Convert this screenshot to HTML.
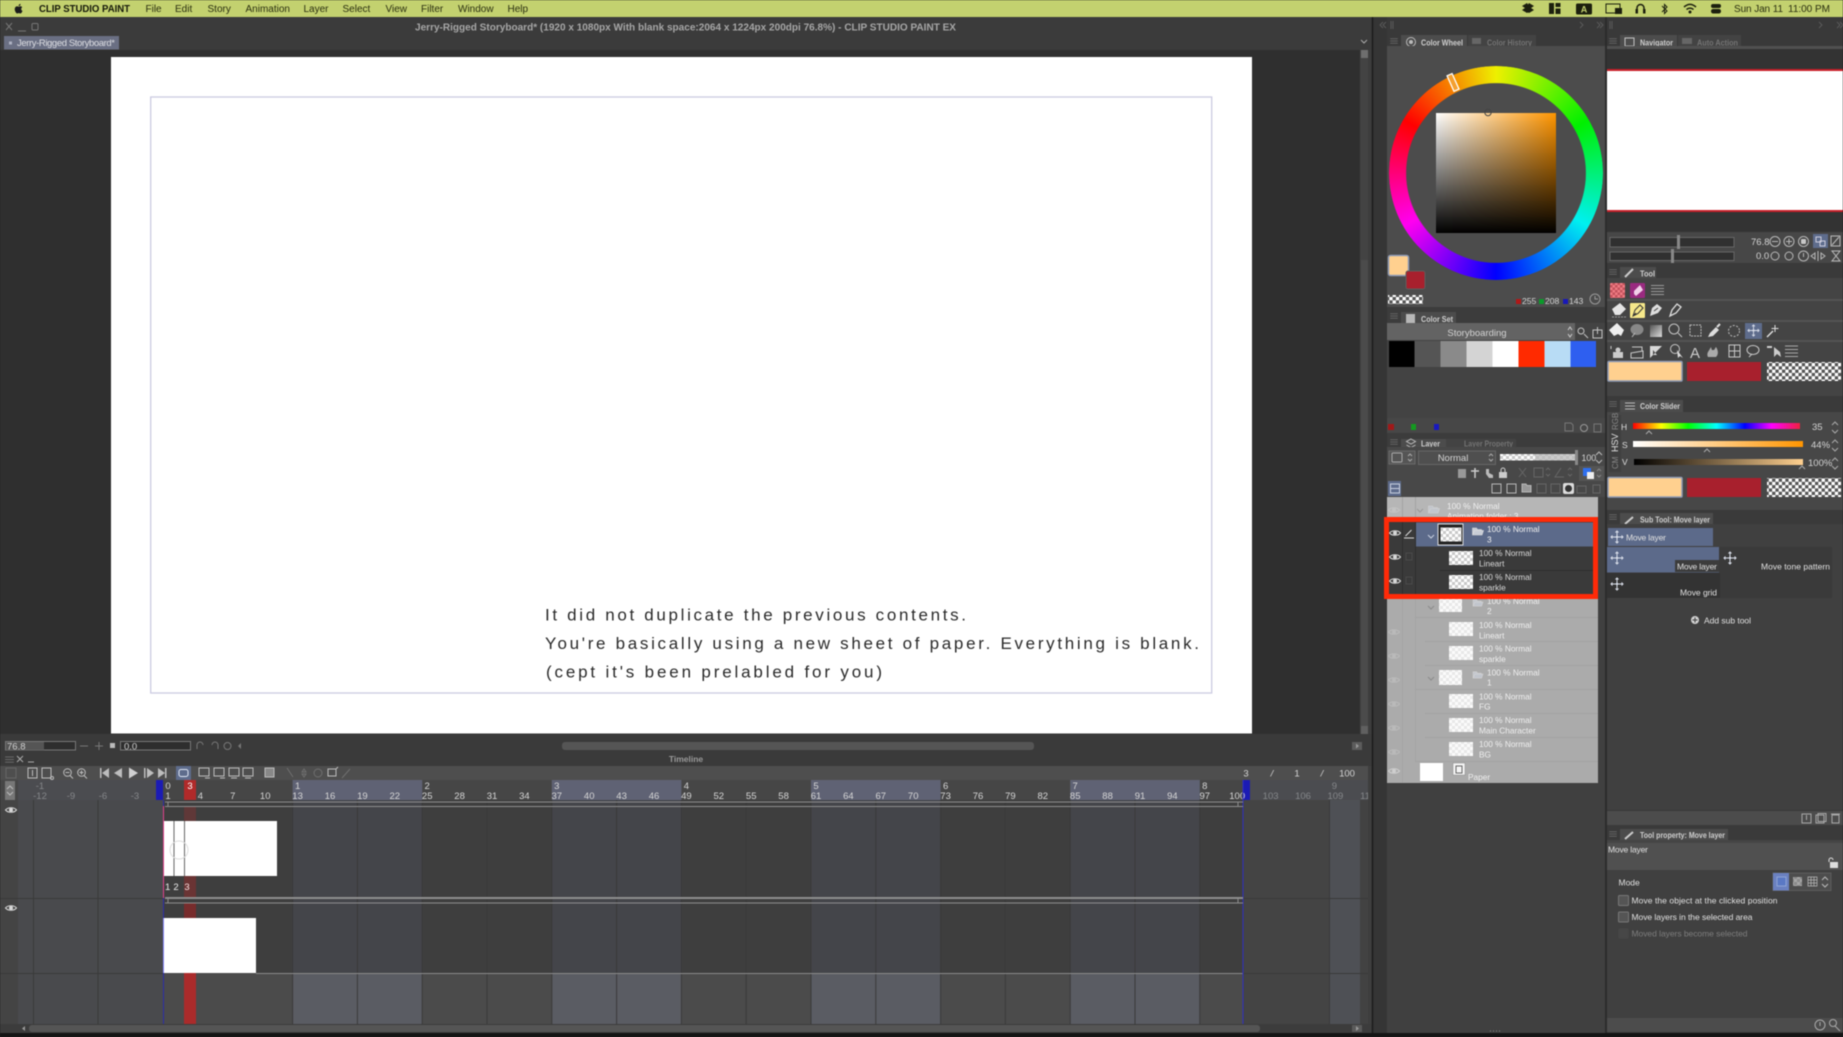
<!DOCTYPE html>
<html><head><meta charset="utf-8"><title>Clip Studio Paint</title>
<style>
html,body{margin:0;padding:0;background:#222;width:1843px;height:1037px;overflow:hidden}
#wrap{position:relative;width:1843px;height:1037px;filter:blur(.4px)}
svg{position:absolute;left:0;top:0;display:block}
text{font-family:"Liberation Sans",sans-serif;font-size:8.600px;fill:#d4d4d4}
.m{font-size:10px;fill:#2a2f10}
.c{text-anchor:middle}
.r{font-size:9.500px;text-anchor:middle;fill:#d6d6d6}
.rd{font-size:9.500px;text-anchor:middle;fill:#85878a}
.l{font-size:8.300px;fill:#efefef}
.h{font-size:8.500px;fill:#e0e0e0}
.tab{font-size:8.500px;font-weight:bold;fill:#cfcfcf}
.tabd{font-size:8.500px;font-weight:bold;fill:#747474}
.hw{font-size:17px;fill:#2a2a2a}
.i{fill:none;stroke:#c4c4c4;stroke-width:1}
.id{fill:none;stroke:#777;stroke-width:1}
#wheel{position:absolute;left:1389px;top:66px;width:214px;height:214px;border-radius:50%;background:conic-gradient(#eef000 0deg,#00f000 60deg,#00f0f0 120deg,#0000ff 180deg,#ff00f0 240deg,#ff0000 300deg,#eef000 360deg);-webkit-mask:radial-gradient(circle closest-side,transparent 83.6%,#000 84.4%);mask:radial-gradient(circle closest-side,transparent 83.6%,#000 84.4%)}
</style></head><body><div id="wrap">
<svg width="1843" height="1037" viewBox="0 0 1843 1037" xmlns="http://www.w3.org/2000/svg">
<defs>
<pattern id="ckd" width="6.600" height="6.600" patternUnits="userSpaceOnUse"><rect width="6.600" height="6.600" fill="#fff"/><rect width="3.300" height="3.300" fill="#555"/><rect x="3.300" y="3.300" width="3.300" height="3.300" fill="#555"/></pattern>
<pattern id="cks" width="6" height="6" patternUnits="userSpaceOnUse"><rect width="6" height="6" fill="#fff"/><rect width="3" height="3" fill="#c8c8c8"/><rect x="3" y="3" width="3" height="3" fill="#c8c8c8"/></pattern>
<pattern id="ckl" width="6" height="6" patternUnits="userSpaceOnUse"><rect width="6" height="6" fill="#fbfbfb"/><rect width="3" height="3" fill="#e8e8e8"/><rect x="3" y="3" width="3" height="3" fill="#e8e8e8"/></pattern>
<pattern id="ckr" width="5" height="5" patternUnits="userSpaceOnUse"><rect width="5" height="5" fill="#ee7a82"/><rect width="2.500" height="2.500" fill="#c2525c"/><rect x="2.500" y="2.500" width="2.500" height="2.500" fill="#c2525c"/></pattern>
<linearGradient id="sv1"><stop offset="0" stop-color="#fff"/><stop offset="1" stop-color="#ff9500"/></linearGradient>
<linearGradient id="sv2" x2="0" y2="1"><stop offset="0" stop-color="#000" stop-opacity="0"/><stop offset="1" stop-color="#000"/></linearGradient>
<linearGradient id="gs" x1="0" y1="0" x2="1" y2="1"><stop offset="0" stop-color="#555"/><stop offset="1" stop-color="#ddd"/></linearGradient>
<linearGradient id="hue"><stop offset="0" stop-color="#f00"/><stop offset=".17" stop-color="#ff0"/><stop offset=".33" stop-color="#0f0"/><stop offset=".5" stop-color="#0ff"/><stop offset=".67" stop-color="#00f"/><stop offset=".83" stop-color="#f0f"/><stop offset="1" stop-color="#f02040"/></linearGradient>
<linearGradient id="sat"><stop offset="0" stop-color="#fff"/><stop offset="1" stop-color="#ff9500"/></linearGradient>
<linearGradient id="val"><stop offset="0" stop-color="#000"/><stop offset="1" stop-color="#ffd08f"/></linearGradient>
<symbol id="eye" viewBox="0 0 12 8" overflow="visible"><path d="M.5 4C3 1 9 1 11.500 4 9 7 3 7 .5 4z" fill="none" stroke="#d8d8d8"/><circle cx="6" cy="4" r="2" fill="#d8d8d8"/></symbol>
<symbol id="mv" viewBox="0 0 14 14" overflow="visible"><path d="M7 1v12M1 7h12M5.500 2.500 7 1l1.500 1.500M5.500 11.500 7 13l1.500-1.500M2.500 5.500 1 7l1.500 1.500M11.500 5.500 13 7l-1.500 1.500" fill="none" stroke="#d8dde8" stroke-width="1"/><circle cx="7" cy="7" r="1.200" fill="#d8dde8"/></symbol>
<symbol id="fold" viewBox="0 0 12 10" overflow="visible"><path d="M.5 9V2h4l1 1.500h4V5M.5 9l2-4.500H11.500L10 9z" fill="#c7ccd6" stroke="#e0e0e0" stroke-width=".6"/></symbol>
<symbol id="ham" viewBox="0 0 10 8" overflow="visible"><path d="M0 1h10M0 4h10M0 7h10" stroke="#6f6f6f"/></symbol>
</defs>

<rect width="1843" height="1037" fill="#2c2c2c"/>

<!-- menu bar -->
<rect width="1843" height="17" fill="#c3d16f"/>
<path transform="translate(12.500 1.500) scale(.6)" fill="#1b1b1b" d="M14.500 12.600c0-2 1.600-3 1.700-3-.9-1.400-2.400-1.600-2.900-1.600-1.200-.1-2.400.7-3 .7s-1.600-.7-2.600-.7c-1.300 0-2.600.8-3.300 2-1.400 2.400-.4 6 1 8 .7 1 1.500 2 2.500 2 1 0 1.400-.6 2.600-.6s1.500.6 2.600.6c1.100 0 1.800-1 2.400-2 .8-1.100 1.100-2.200 1.100-2.300-.1 0-2.100-.8-2.100-3.100zM12.600 6.600c.5-.7.900-1.600.8-2.600-.8 0-1.800.5-2.400 1.200-.5.6-1 1.500-.8 2.400.9.1 1.800-.4 2.400-1z"/>
<text class="m" x="39" y="12" style="font-weight:bold;fill:#15180a" textLength="91" lengthAdjust="spacingAndGlyphs">CLIP STUDIO PAINT</text>
<text class="m" x="145.500" y="12">File</text><text class="m" x="175" y="12">Edit</text><text class="m" x="207.500" y="12">Story</text><text class="m" x="245.500" y="12">Animation</text><text class="m" x="303.500" y="12">Layer</text><text class="m" x="342.500" y="12">Select</text><text class="m" x="385.500" y="12">View</text><text class="m" x="421" y="12">Filter</text><text class="m" x="458" y="12">Window</text><text class="m" x="507.500" y="12">Help</text>
<path d="M1527 3l-5 3 3 2-3 2 5 3 1-.6 1 .6 5-3-3-2 3-2-5-3-1 1.500z" fill="#1c1f0e"/>
<path d="M1549 3h5v11h-5zM1555.500 3h5v4h-5zM1555.500 8.500h5v5.500h-5z" fill="#1c1f0e"/>
<rect x="1576" y="3.500" width="16" height="11" rx="1.500" fill="#1c1f0e"/><text x="1584" y="12.500" class="c" style="fill:#c3d16f;font-size:9px;font-weight:bold">A</text>
<path d="M1606 4h14v9h-14z" fill="none" stroke="#1c1f0e"/><rect x="1615" y="8" width="7" height="6" fill="#1c1f0e"/>
<path d="M1637 13V8a3.500 3.500 0 0 1 7 0v5" fill="none" stroke="#1c1f0e" stroke-width="1.500"/><rect x="1635.500" y="9" width="2.500" height="4.500" fill="#1c1f0e"/><rect x="1643" y="9" width="2.500" height="4.500" fill="#1c1f0e"/>
<path d="M1662 6l5 5-2.500 2.500v-9L1667 7l-5 5" fill="none" stroke="#1c1f0e"/>
<path d="M1684 7c4-3.500 8-3.500 12 0M1686.500 9.500c2.500-2 4.500-2 7 0" fill="none" stroke="#1c1f0e" stroke-width="1.500"/><circle cx="1690" cy="12" r="1.500" fill="#1c1f0e"/>
<rect x="1711" y="4" width="10" height="4" rx="2" fill="#1c1f0e"/><rect x="1711" y="9" width="10" height="4.500" rx="2.200" fill="#1c1f0e"/>
<text class="m" x="1734" y="12" textLength="49" style="font-size:10px">Sun Jan 11</text><text class="m" x="1788" y="12" textLength="42" style="font-size:10px">11:00 PM</text>

<!-- title bar -->
<rect y="17" width="1372" height="33" fill="#3b3b3b"/>
<path d="M6 23l6 7M12 23l-6 7" class="id"/><path d="M18 31h8" class="id"/><rect x="32" y="23.500" width="6" height="6.500" rx="1" class="id"/>
<text x="415" y="30.500" textLength="541" lengthAdjust="spacingAndGlyphs" style="font-size:10px;font-weight:bold;fill:#a6a6a6">Jerry-Rigged Storyboard* (1920 x 1080px With blank space:2064 x 1224px 200dpi 76.8%)  - CLIP STUDIO PAINT EX</text>
<rect x="4" y="36" width="115" height="13.500" fill="#6a6f83"/><rect x="9" y="41.500" width="3" height="3" fill="#aeb2c2"/><text x="17" y="46" textLength="98" style="font-size:9.500px;fill:#dcdde2">Jerry-Rigged Storyboard*</text>
<path d="M1361 40l3 3 3-3" fill="none" stroke="#aaa"/>

<!-- canvas -->
<rect y="50" width="1360" height="684" fill="#2f2f2f"/>
<rect x="1360" y="50" width="12" height="684" fill="#3d3d3d"/><rect x="1360" y="50" width="8" height="684" fill="#434343"/><rect x="1361" y="50" width="7" height="8" fill="#6e6e6e"/><rect x="1361" y="260" width="7" height="466" fill="#4b4b4b"/><rect x="1361" y="726" width="7" height="8" fill="#606060"/>
<rect x="111" y="57" width="1141" height="676.500" fill="#fff"/>
<rect x="150.700" y="97" width="1061" height="596" fill="#fff" stroke="#cccbe2" stroke-width="1.300"/>
<text class="hw" x="545" y="620.500" textLength="421">It did not duplicate the previous contents.</text>
<text class="hw" x="545" y="649" textLength="654">You're basically using a new sheet of paper. Everything is blank.</text>
<text class="hw" x="546" y="677.500" textLength="336">(cept it's been prelabled for you)</text>

<!-- canvas status -->
<rect y="734" width="1372" height="18" fill="#3a3a3a"/>
<rect x="5.500" y="741.500" width="70" height="8.500" fill="#2e2e2e" stroke="#777"/><rect x="6" y="742" width="38" height="8" fill="#555"/><text x="7" y="749.500" style="fill:#d0d0d0;font-size:9.500px">76.8</text>
<path d="M80 746h8M95 746h8M99 742v8" class="id"/><rect x="110" y="743" width="5" height="5" fill="#bbb"/>
<rect x="120.500" y="741.500" width="70" height="8.500" fill="#2e2e2e" stroke="#777"/><text x="124" y="749.500" style="fill:#d0d0d0;font-size:9.500px">0.0</text>
<path d="M197 749v-4a3 3 0 0 1 6 0M212 745a3 3 0 0 1 6 0v4" class="id"/><circle cx="227.500" cy="746" r="3.500" class="id"/><path d="M241 743l-3 3 3 3z" fill="#777"/>
<rect x="562" y="742" width="472" height="8" rx="3" fill="#555"/>
<path d="M1352 742h10v8h-10z" fill="#5c5c5c"/><path d="M1356 743.500l3 2.500-3 2.500z" fill="#999"/>

<!-- timeline header -->
<rect y="752" width="1372" height="14" fill="#3a3a3a"/>
<use href="#ham" x="5" y="756" width="9" height="7"/><path d="M17 756l6 6M23 756l-6 6" stroke="#aaa" fill="none"/><path d="M28 762h6" stroke="#aaa"/>
<text x="686" y="762" class="c" style="font-size:8.500px;fill:#9a9a9a;font-weight:bold">Timeline</text>
<rect y="766" width="1368" height="14" fill="#4e4e4e"/>
<rect x="176" y="766" width="15" height="14" fill="#5e6c8c"/>
<g fill="none" stroke="#bdbdbd">
<rect x="6" y="768" width="10" height="10" stroke="#666"/>
<rect x="28" y="768" width="9" height="10"/><path d="M32.500 770v6"/>
<rect x="42" y="768" width="9" height="10"/><circle cx="52" cy="778" r="1.500"/>
<circle cx="67.500" cy="772.500" r="3.800"/><path d="M70 775.500l3 3M65.500 772.500h4"/>
<circle cx="81.500" cy="772.500" r="3.800"/><path d="M84 775.500l3 3M79.500 772.500h4M81.500 770.500v4"/>
<rect x="179" y="769.500" width="9" height="7" rx="2" stroke="#dfe6f4"/>
<rect x="199" y="768" width="10" height="8"/><rect x="214" y="768" width="10" height="8"/><rect x="229" y="768" width="10" height="8"/><rect x="243" y="768" width="10" height="8"/>
<path d="M205 778h5M220 778h5M231 778h6M245 778h6"/>
<rect x="265" y="768" width="9" height="9" fill="#888"/>
<g stroke="#6f6f6f"><path d="M287 768l6 9M304 769l-2 3h4zM304 777l-2-3h4z"/><circle cx="318" cy="773" r="4"/></g>
<path d="M328 769h8v7h-8zM336 769l2-2"/>
<path d="M342 778l8-9" stroke="#6f6f6f"/>
</g>
<g fill="#bdbdbd">
<path d="M100 768h1.500v10H100zM109 768v10l-7-5z"/>
<path d="M122 768v10l-8-5z"/><path d="M129 767.500v11l9-5.500z" fill="#d0d0d0"/>
<path d="M144 768h1.500v10H144zM147 768v10l7-5z"/><path d="M158 768v10l7-5zM165 768h1.500v10H165z"/>
</g>
<text x="1246" y="776.500" class="c" style="font-size:9.500px">3</text><text x="1272" y="776.500" class="c" style="font-size:9.500px;font-style:italic">/</text><text x="1297" y="776.500" class="c" style="font-size:9.500px">1</text><text x="1322" y="776.500" class="c" style="font-size:9.500px;font-style:italic">/</text><text x="1347" y="776.500" class="c" style="font-size:9.500px">100</text>

<!-- ruler -->
<rect x="0" y="780" width="1368" height="20" fill="#464646"/>
<rect x="18" y="780" width="145" height="20" fill="#4b4c50"/>
<rect x="1243" y="780" width="125" height="20" fill="#4b4c50"/>
<g fill="#5f6274"><rect x="292.600" y="780" width="129.600" height="20"/><rect x="551.800" y="780" width="129.600" height="20"/><rect x="811" y="780" width="129.600" height="20"/><rect x="1070.200" y="780" width="129.600" height="20"/></g>
<rect x="5" y="781" width="10" height="19" fill="#777"/><path d="M7 789l3-3 3 3M7 792l3 3 3-3" fill="none" stroke="#bbb"/>
<rect x="156" y="780" width="7" height="20" fill="#1b1bb4"/>
<rect x="184" y="780" width="12" height="20" fill="#b02a2a"/>
<rect x="1243" y="780" width="7" height="20" fill="#1b1bb4"/>
<text class="rd" x="40" y="789">-1</text>
<text class="r" x="168" y="789">0</text><text class="r" x="190" y="789" style="fill:#fff">3</text><text class="r" x="297.600" y="789">1</text><text class="r" x="427.200" y="789">2</text><text class="r" x="556.800" y="789">3</text><text class="r" x="686.400" y="789">4</text><text class="r" x="816" y="789">5</text><text class="r" x="945.600" y="789">6</text><text class="r" x="1075.200" y="789">7</text><text class="r" x="1204.800" y="789">8</text><text class="rd" x="1334.400" y="789">9</text>
<text class="rd" x="40" y="799">-12</text><text class="rd" x="71" y="799">-9</text><text class="rd" x="103" y="799">-6</text><text class="rd" x="135" y="799">-3</text>
<text class="r" x="168" y="799">1</text><text class="r" x="200.400" y="799">4</text><text class="r" x="232.800" y="799">7</text><text class="r" x="265.200" y="799">10</text><text class="r" x="297.600" y="799">13</text><text class="r" x="330" y="799">16</text><text class="r" x="362.400" y="799">19</text><text class="r" x="394.800" y="799">22</text><text class="r" x="427.200" y="799">25</text><text class="r" x="459.600" y="799">28</text><text class="r" x="492" y="799">31</text><text class="r" x="524.400" y="799">34</text><text class="r" x="556.800" y="799">37</text><text class="r" x="589.200" y="799">40</text><text class="r" x="621.600" y="799">43</text><text class="r" x="654" y="799">46</text><text class="r" x="686.400" y="799">49</text><text class="r" x="718.800" y="799">52</text><text class="r" x="751.200" y="799">55</text><text class="r" x="783.600" y="799">58</text><text class="r" x="816" y="799">61</text><text class="r" x="848.400" y="799">64</text><text class="r" x="880.800" y="799">67</text><text class="r" x="913.200" y="799">70</text><text class="r" x="945.600" y="799">73</text><text class="r" x="978" y="799">76</text><text class="r" x="1010.400" y="799">79</text><text class="r" x="1042.800" y="799">82</text><text class="r" x="1075.200" y="799">85</text><text class="r" x="1107.600" y="799">88</text><text class="r" x="1140" y="799">91</text><text class="r" x="1172.400" y="799">94</text><text class="r" x="1204.800" y="799">97</text><text class="r" x="1237.200" y="799">100</text><text class="rd" x="1270.600" y="799">103</text><text class="rd" x="1303" y="799">106</text><text class="rd" x="1335.400" y="799">109</text><text class="rd" x="1365" y="799">11</text>

<!-- tracks -->
<rect x="0" y="800" width="18" height="224" fill="#444"/>
<rect x="18" y="800" width="145" height="224" fill="#494a4d"/>
<rect x="1243" y="800" width="87" height="224" fill="#444"/>
<rect x="1330" y="800" width="30" height="224" fill="#4e5055"/>
<rect x="1360" y="800" width="8" height="224" fill="#424242"/>
<rect x="1368" y="766" width="4" height="267" fill="#3e3e3e"/>
<rect x="163" y="800" width="1080" height="173" fill="#3e3e3e"/>
<rect x="163" y="973" width="1080" height="51" fill="#4b4b4b"/>
<g fill="#44454a"><rect x="292.600" y="800" width="129.600" height="173"/><rect x="551.800" y="800" width="129.600" height="173"/><rect x="811" y="800" width="129.600" height="173"/><rect x="1070.200" y="800" width="129.600" height="173"/></g>
<g fill="#5a5c63"><rect x="292.600" y="973" width="129.600" height="51"/><rect x="551.800" y="973" width="129.600" height="51"/><rect x="811" y="973" width="129.600" height="51"/><rect x="1070.200" y="973" width="129.600" height="51"/></g>
<g stroke="#3a3a3a"><path d="M33.500 800v224M98 800v224M292.600 800v224M357.400 800v224M422.200 800v224M487 800v224M551.800 800v224M616.600 800v224M681.400 800v224M746.200 800v224M811 800v224M875.800 800v224M940.600 800v224M1005.400 800v224M1070.200 800v224M1135 800v224M1199.800 800v224M1329.400 800v224"/><path d="M0 898.500h1368M0 973.500h163M1243 973.500h125"/></g>
<rect x="184" y="807" width="12" height="14" fill="#5f3838"/><rect x="184" y="876" width="12" height="22" fill="#6a3434"/><rect x="184" y="903" width="12" height="15" fill="#772c2c"/><rect x="184" y="973" width="12" height="51" fill="#aa2b2b"/>
<rect x="163" y="821" width="114" height="55" fill="#fff"/>
<path d="M174 821v55M184.500 821v55" stroke="#666" stroke-width="1"/>
<circle cx="179" cy="850" r="9" fill="none" stroke="#ddd"/>
<text x="165" y="890" style="fill:#eee;font-size:9.500px">1</text><text x="176" y="890" class="c" style="fill:#eee;font-size:9.500px">2</text><text x="187" y="890" class="c" style="fill:#f6e0e0;font-size:9.500px">3</text>
<rect x="163" y="918" width="93" height="55" fill="#fff"/>
<path d="M256 973.500h987" stroke="#8a8a8a"/>
<path d="M163.500 800v224" stroke="#2c2ca8"/>
<path d="M163.500 806v92" stroke="#e0408a"/>
<path d="M163.500 918v55" stroke="#8888ff"/>
<path d="M1243 780v244" stroke="#3030c0"/>
<g stroke="#8e8e8e" fill="none"><path d="M165 802h1078M165 806.500h1078M165 897.500h1078M165 898.500h1078M165 903h1078"/><path d="M168 802v5M1238 802v5M168 898v5M1238 898v5"/></g>
<use href="#eye" x="5" y="806" width="12" height="8"/><use href="#eye" x="5" y="904" width="12" height="8"/>
<rect y="1024" width="1372" height="9" fill="#3c3c3c"/><rect x="29" y="1025" width="1231" height="7" rx="3" fill="#555"/><path d="M25 1026l-3 2.500 3 2.500z" fill="#999"/><path d="M1352 1025h10v7h-10z" fill="#5a5a5a"/><path d="M1356 1026l3 2.500-3 2.500z" fill="#999"/>

<!-- right side backdrop -->
<rect x="1373" y="17" width="470" height="1016" fill="#393939"/>
<rect x="1373" y="17" width="14" height="1016" fill="#353535"/>
<path d="M1372.500 17v1016" stroke="#1c1c1c" stroke-width="1.500"/>
<rect x="1605" y="17" width="2" height="1016" fill="#2c2c2c"/>
<rect y="1033" width="1843" height="4" fill="#151515"/>
<g fill="none" stroke="#5a5a5a"><path d="M1383 22l-3 3 3 3M1386 22l-3 3 3 3M1391 21v8M1393 21v8M1580 22l3 3-3 3M1600 22l3 3-3 3M1597 22l3 3-3 3M1610 21v8M1612 21v8M1819 22l3 3-3 3M1837 22l3 3-3 3M1840 22l3 3-3 3"/></g>

<!-- color wheel panel -->
<use href="#ham" x="1390" y="38" width="8" height="6"/>
<rect x="1401" y="35" width="66" height="11" fill="#4c4c4c"/><circle cx="1411" cy="42" r="4.500" fill="none" stroke="#bbb"/><circle cx="1411" cy="42" r="2" fill="#bbb"/><text class="tab" x="1421" y="45.500" textLength="42" lengthAdjust="spacingAndGlyphs">Color Wheel</text>
<rect x="1468" y="35" width="68" height="11" fill="#434343"/><rect x="1472" y="38" width="9" height="6" fill="#666"/><text class="tabd" x="1487" y="45.500" textLength="45" lengthAdjust="spacingAndGlyphs">Color History</text>
<rect x="1387" y="46" width="218" height="261" fill="#4c4c4c"/>
<rect x="1436" y="113" width="120" height="120" fill="url(#sv1)"/><rect x="1436" y="113" width="120" height="120" fill="url(#sv2)"/>
<rect x="1388.500" y="255.500" width="20" height="20" rx="2" fill="#ffd08f" stroke="#8f9bb5" stroke-width="1.500"/>
<rect x="1406" y="271" width="19" height="18" rx="2" fill="#a8202d" stroke="#5c5c5c"/>
<rect x="1388" y="295" width="35" height="9" fill="url(#ckd)"/>
<rect x="1516" y="299" width="5" height="5" fill="#b01818"/><text x="1522" y="304">255</text><rect x="1539" y="299" width="5" height="5" fill="#0a9a2a"/><text x="1545" y="304">208</text><rect x="1563" y="299" width="5" height="5" fill="#1818b8"/><text x="1569" y="304">143</text>
<circle cx="1595" cy="299" r="5" fill="none" stroke="#999"/><path d="M1595 296v3h3" fill="none" stroke="#999"/>

<!-- color set -->
<rect x="1387" y="307" width="218" height="16" fill="#3c3c3c"/>
<use href="#ham" x="1390" y="313" width="8" height="6"/>
<rect x="1401" y="312" width="55" height="11" fill="#4c4c4c"/><rect x="1406" y="314" width="9" height="9" fill="#b7b7b7"/><text class="tab" x="1421" y="322" textLength="32" lengthAdjust="spacingAndGlyphs">Color Set</text>
<rect x="1387" y="323" width="218" height="110" fill="#434343"/>
<rect x="1387" y="323" width="188" height="17" fill="#636363"/><text x="1477" y="336" class="c" style="font-size:9.500px">Storyboarding</text><path d="M1568 330l2-3 2 3M1568 334l2 3 2-3" fill="none" stroke="#ccc"/>
<circle cx="1581" cy="331" r="3" class="i"/><path d="M1584 334l4 4" class="i"/><rect x="1593" y="330" width="9" height="8" class="i"/><path d="M1597.500 327v7" class="i"/>
<rect x="1389" y="341" width="25.500" height="26" fill="#000"/><rect x="1414.500" y="341" width="26" height="26" fill="#555"/><rect x="1440.500" y="341" width="26" height="26" fill="#8a8a8a"/><rect x="1466.500" y="341" width="26" height="26" fill="#d4d4d4"/><rect x="1492.500" y="341" width="26" height="26" fill="#fff"/><rect x="1518.500" y="341" width="26" height="26" fill="#ff2a00"/><rect x="1544.500" y="341" width="26" height="26" fill="#b8dcf5"/><rect x="1570.500" y="341" width="25.500" height="26" fill="#2e5ff0"/>
<rect x="1387" y="418" width="218" height="15" fill="#474747"/>
<rect x="1388" y="424" width="6" height="6" fill="#a01818"/><rect x="1411" y="424" width="5" height="6" fill="#149a20"/><rect x="1434" y="424" width="5" height="6" fill="#1818c0"/>
<path d="M1565 423h6l2 2v6h-8zM1594 424h7v8h-7z" class="id"/><circle cx="1584" cy="428" r="3.500" fill="none" stroke="#999"/>

<!-- layer panel -->
<rect x="1387" y="433" width="218" height="14" fill="#3c3c3c"/>
<use href="#ham" x="1390" y="439" width="8" height="6"/>
<rect x="1401" y="439" width="45" height="9" fill="#4c4c4c"/><path d="M1411 439l4.500 2.500-4.500 2.500-4.500-2.500zM1406.500 445l4.500 2.500 4.500-2.500" fill="none" stroke="#bbb"/><text class="tab" x="1421" y="446.500" textLength="19" lengthAdjust="spacingAndGlyphs">Layer</text>
<rect x="1446" y="439" width="70" height="9" fill="#434343"/><text class="tabd" x="1464" y="446.500" textLength="49" lengthAdjust="spacingAndGlyphs">Layer Property</text>
<rect x="1387" y="447" width="218" height="50" fill="#484848"/>
<rect x="1389" y="451" width="26" height="13" fill="#555" stroke="#6a6a6a"/><rect x="1392" y="453" width="10" height="9" rx="1" fill="none" stroke="#aaa"/><path d="M1408 456l2-2 2 2M1408 459l2 2 2-2" fill="none" stroke="#aaa"/>
<rect x="1418.500" y="451" width="77" height="13.500" fill="#4f4f4f" stroke="#666"/><text x="1453" y="461" class="c" style="font-size:9.500px">Normal</text><path d="M1489 456l2-2 2 2M1489 459l2 2 2-2" fill="none" stroke="#aaa"/>
<rect x="1500" y="454" width="75" height="6.500" fill="url(#cks)"/><rect x="1535" y="454" width="40" height="6.500" fill="#bbb" opacity=".75"/><rect x="1575" y="450" width="3" height="15" fill="#888"/>
<text x="1581.500" y="461" style="font-size:8.800px">100</text><path d="M1596 455l3-3 3 3M1596 460l3 3 3-3" fill="none" stroke="#bbb"/>
<rect x="1458" y="469" width="8" height="9" fill="#999"/><path d="M1475 468v10M1471 471h8" stroke="#ccc" stroke-width="1.500"/><path d="M1486 469h3v4l4 2v3h-4l-3-4z" fill="#bbb"/><rect x="1499" y="472" width="8" height="6" fill="#ccc"/><path d="M1501 472v-2a2 2 0 0 1 4 0v2" fill="none" stroke="#ccc"/>
<g fill="none" stroke="#666"><path d="M1519 468l7 9M1526 468l-7 9"/><rect x="1534" y="468" width="9" height="9"/><path d="M1546 470l2-2 2 2M1546 474l2 2 2-2M1561 468l-6 9h9M1568 470l2-2 2 2M1568 474l2 2 2-2"/></g>
<rect x="1579" y="466" width="25" height="15" fill="#555"/><rect x="1583" y="468" width="8" height="8" fill="#2e6ff0"/><rect x="1587" y="472" width="7" height="7" fill="#eee"/><path d="M1597 471l2-2 2 2M1597 475l2 2 2-2" fill="none" stroke="#888"/>
<rect x="1388" y="481" width="13" height="15" fill="#5e6c8c"/><rect x="1390.500" y="484" width="9" height="9" fill="none" stroke="#c8d0e0"/><path d="M1390.500 488.500h9" stroke="#c8d0e0"/>
<g fill="none" stroke="#b8b8b8"><rect x="1492" y="484" width="9" height="9"/><rect x="1507" y="484" width="9" height="9"/><path d="M1522 492v-8h4l1 1.500h4V492z" fill="#999"/></g><g fill="none" stroke="#666"><rect x="1537" y="484" width="9" height="9"/><rect x="1551" y="484" width="9" height="9"/><rect x="1577" y="486" width="9" height="7"/><rect x="1593" y="485" width="7" height="8"/></g><rect x="1563" y="483" width="11" height="11" rx="2" fill="#ddd"/><circle cx="1568.500" cy="488.500" r="3.500" fill="#333"/>

<!-- layer list -->
<rect x="1387" y="497" width="218" height="536" fill="#404040"/>
<rect x="1387" y="497" width="211" height="286" fill="#ababab"/>
<rect x="1387" y="497" width="211" height="21" fill="#b6b6b6"/>
<path d="M1402.500 497v286M1415.500 497v264" stroke="#a4a4a4"/>
<path d="M1415 617.500h183M1425 641.500h173M1425 665.500h173M1415 689.500h183M1425 713.500h173M1425 737.500h173M1415 761.500h183" stroke="#a2a2a2"/>
<use href="#eye" x="1388" y="506" width="12" height="8" opacity=".4"/>
<path d="M1417 509l3 3 3-3" fill="none" stroke="#999"/><use href="#fold" x="1428" y="504" width="12" height="10" opacity=".7"/>
<text class="l" x="1447" y="509">100 % Normal</text><text class="l" x="1447" y="519">Animation folder : 3</text>

<!-- grey rows -->
<g opacity=".35"><use href="#eye" x="1388" y="628" width="12" height="8"/><use href="#eye" x="1388" y="652" width="12" height="8"/><use href="#eye" x="1388" y="676" width="12" height="8"/><use href="#eye" x="1388" y="700" width="12" height="8"/><use href="#eye" x="1388" y="724" width="12" height="8"/><use href="#eye" x="1388" y="748" width="12" height="8"/></g>
<use href="#eye" x="1388" y="767" width="12" height="8" opacity=".8"/>
<path d="M1428 606l3 3 3-3M1428 677l3 3 3-3" fill="none" stroke="#8a8a8a"/>
<rect x="1439" y="597" width="23" height="15" fill="url(#ckl)"/><use href="#fold" x="1472" y="598" width="12" height="9" opacity=".8"/>
<text class="l" x="1487" y="604">100 % Normal</text><text class="l" x="1487" y="614">2</text>
<rect x="1449" y="622" width="24" height="14" fill="url(#ckl)"/><text class="l" x="1479" y="628">100 % Normal</text><text class="l" x="1479" y="638.500">Lineart</text>
<rect x="1449" y="646" width="24" height="14" fill="url(#ckl)"/><text class="l" x="1479" y="651.500">100 % Normal</text><text class="l" x="1479" y="662">sparkle</text>
<rect x="1439" y="670" width="23" height="15" fill="url(#ckl)"/><use href="#fold" x="1472" y="670" width="12" height="9" opacity=".8"/><text class="l" x="1487" y="675.500">100 % Normal</text><text class="l" x="1487" y="685.500">1</text>
<rect x="1449" y="694" width="24" height="14" fill="url(#ckl)"/><text class="l" x="1479" y="699.500">100 % Normal</text><text class="l" x="1479" y="709.500">FG</text>
<rect x="1449" y="718" width="24" height="14" fill="url(#ckl)"/><text class="l" x="1479" y="723">100 % Normal</text><text class="l" x="1479" y="733.500">Main Character</text>
<rect x="1449" y="742" width="24" height="14" fill="url(#ckl)"/><text class="l" x="1479" y="747">100 % Normal</text><text class="l" x="1479" y="757.500">BG</text>
<rect x="1420" y="763" width="23" height="18" fill="#fff"/><rect x="1453" y="763" width="12" height="12" fill="#f4f4f4" stroke="#888" stroke-width=".5"/><rect x="1456" y="766" width="6" height="7" fill="none" stroke="#666"/><text class="l" x="1468" y="780">Paper</text>

<!-- selected group in red box -->
<rect x="1387" y="518" width="211" height="78" fill="#3a3a3a"/>
<rect x="1415.500" y="522.500" width="178" height="24" fill="#5c6a8a"/>
<path d="M1402.500 519v75M1415.500 519v75M1440 570.500h153M1440 594.500h153" stroke="#2e2e2e"/>
<use href="#eye" x="1389" y="529" width="12" height="8"/><use href="#eye" x="1389" y="553" width="12" height="8"/><use href="#eye" x="1389" y="577" width="12" height="8"/>
<path d="M1404 538h10M1405.500 536l6-6" stroke="#ddd" fill="none"/>
<rect x="1406" y="553" width="6" height="7" fill="none" stroke="#4a4a4a"/><rect x="1406" y="577" width="6" height="7" fill="none" stroke="#4a4a4a"/>
<path d="M1428 535l3 3 3-3" fill="none" stroke="#c8d0e0"/>
<rect x="1438" y="524" width="25" height="21" fill="#222" stroke="#ddd"/><rect x="1440.500" y="527.500" width="21" height="14" fill="url(#cks)"/>
<use href="#fold" x="1472" y="526" width="12" height="10"/>
<text class="l" x="1487" y="532">100 % Normal</text><text class="l" x="1487" y="542.500">3</text>
<rect x="1449" y="551" width="24" height="14" fill="url(#cks)"/><text class="l" x="1479" y="556" style="fill:#d8d8d8">100 % Normal</text><text class="l" x="1479" y="566.500" style="fill:#d8d8d8">Lineart</text>
<rect x="1449" y="575" width="24" height="14" fill="url(#cks)"/><text class="l" x="1479" y="580" style="fill:#d8d8d8">100 % Normal</text><text class="l" x="1479" y="590.500" style="fill:#d8d8d8">sparkle</text>
<rect x="1386.500" y="519.500" width="209" height="77" fill="none" stroke="#ff2a08" stroke-width="5"/>

<!-- bottom handle -->
<path d="M1490 1031h12" stroke="#888" stroke-dasharray="1 2"/>

<!-- navigator -->
<use href="#ham" x="1609" y="38" width="8" height="6"/>
<rect x="1620" y="35" width="57" height="11" fill="#4c4c4c"/><rect x="1625" y="38" width="9" height="8" class="i"/><text class="tab" x="1640" y="45.500" textLength="33" lengthAdjust="spacingAndGlyphs">Navigator</text>
<rect x="1678" y="35" width="63" height="11" fill="#434343"/><rect x="1682" y="38" width="10" height="6" fill="#666"/><text class="tabd" x="1697" y="45.500" textLength="41" lengthAdjust="spacingAndGlyphs">Auto Action</text>
<rect x="1607" y="46" width="236" height="3" fill="#505050"/>
<rect x="1607" y="49" width="236" height="183" fill="#333"/>
<rect x="1607" y="69" width="236" height="143" fill="#fff"/><rect x="1607" y="69" width="236" height="2" fill="#c8202a"/><rect x="1607" y="210" width="236" height="2" fill="#c8202a"/>
<rect x="1607" y="232" width="236" height="31" fill="#474747"/>
<rect x="1610" y="237.500" width="124" height="9.500" fill="#303030" stroke="#666"/><rect x="1677" y="235" width="3" height="14" fill="#888"/>
<rect x="1610" y="252" width="124" height="8.500" fill="#303030" stroke="#666"/><rect x="1671" y="249" width="3" height="14" fill="#888"/>
<text x="1751" y="245" style="font-size:9.500px">76.8</text><text x="1756" y="259" style="font-size:9.500px">0.0</text>
<g fill="none" stroke="#b8b8b8"><circle cx="1775" cy="241.500" r="5"/><path d="M1772 241.500h6"/><circle cx="1789" cy="241.500" r="5"/><path d="M1786 241.500h6M1789 238.500v6"/><circle cx="1803.500" cy="241.500" r="5"/><circle cx="1775" cy="256" r="4"/><circle cx="1789" cy="256" r="4"/><circle cx="1803.500" cy="256" r="5"/><path d="M1803.500 253v4M1818 251v10M1821 253l4 3-4 3zM1815 253l-4 3 4 3z"/></g>
<rect x="1801" y="239" width="5" height="5" rx="1" fill="#c8c8c8"/>
<rect x="1813" y="234" width="15" height="14" fill="#5e6c8c"/><rect x="1816" y="237" width="5" height="5" fill="none" stroke="#ccd"/><rect x="1820" y="241" width="5" height="5" fill="none" stroke="#ccd"/>
<rect x="1831" y="236" width="9" height="10" fill="none" stroke="#bbb"/><path d="M1832 245l7-8" stroke="#bbb"/>
<path d="M1832 251h8l-4 5 4 5h-8l4-5z" fill="none" stroke="#bbb"/>

<!-- tool -->
<rect x="1607" y="263" width="236" height="15" fill="#3a3a3a"/>
<use href="#ham" x="1609" y="269" width="8" height="6"/>
<rect x="1620" y="267" width="36" height="11" fill="#4c4c4c"/><path d="M1625 277l8-8" stroke="#ccc" stroke-width="2"/><text class="tab" x="1640" y="276.500" textLength="15" lengthAdjust="spacingAndGlyphs">Tool</text>
<rect x="1607" y="278" width="236" height="118" fill="#444"/>
<rect x="1607" y="299" width="236" height="2" fill="#535353"/><rect x="1607" y="320" width="236" height="2" fill="#535353"/><rect x="1607" y="340" width="236" height="2" fill="#535353"/>
<rect x="1610" y="283" width="15" height="15" rx="1" fill="url(#ckr)"/><rect x="1630" y="283" width="15" height="15" rx="1" fill="#9a2a80"/><path d="M1634 294l2 2 7-6-3-5-6 6z" fill="#f2d0ea"/>
<path d="M1651 285.500h13M1651 288.500h13M1651 291.500h13M1651 294.500h13" stroke="#9a9a9a"/>
<path d="M1620 303l-8 6 3 6h5l6-6z" fill="#e4e4e4"/><path d="M1612 317h14" stroke="#999" stroke-dasharray="2 1"/>
<rect x="1630" y="303" width="15" height="15" rx="1" fill="#f6e88a"/><path d="M1633 316l2-6 5-5 3 3-5 5.500zM1633 316l3-3" fill="none" stroke="#333"/>
<path d="M1650 316l2-8 5-4 5 4-4 5z" fill="#ddd"/><path d="M1654 311l4-3" stroke="#444"/>
<path d="M1670 316l2-6 5-6 4 3-5 6z" fill="none" stroke="#e0e0e0" stroke-width="1.300"/>
<path d="M1617 323l7 7-3 6-3-2-4 2-5-6z" fill="#eee"/>
<ellipse cx="1637" cy="329.500" rx="6.500" ry="5.500" fill="#888"/><path d="M1632 337l3-4" stroke="#bbb"/>
<rect x="1650" y="325" width="12" height="12" fill="url(#gs)"/>
<circle cx="1674" cy="329" r="5" class="i"/><path d="M1678 333l4 4" class="i"/>
<rect x="1690" y="325" width="11" height="11" fill="none" stroke="#bbb" stroke-dasharray="2 1"/>
<path d="M1708 337l2-4 6-6 3 3-6 6z" fill="#ddd"/><path d="M1717 327l3-3" stroke="#ddd" stroke-width="2"/>
<circle cx="1734" cy="331" r="5.500" fill="none" stroke="#bbb" stroke-dasharray="2 1.500"/>
<rect x="1745" y="323" width="17" height="16" fill="#5e6c8c"/><use href="#mv" x="1747" y="324" width="13" height="13"/>
<path d="M1767 337l6-6" stroke="#ddd" stroke-width="1.500"/><path d="M1775 325v7M1771.500 328.500h7" stroke="#ddd"/>
<rect x="1613" y="352" width="10" height="6" fill="#ccc"/><circle cx="1618" cy="350" r="2.500" fill="#ccc"/><path d="M1611 346v3" stroke="#ccc"/>
<g fill="none" stroke="#c8c8c8">
<path d="M1631 353l12-2v7l-12 0zM1632 347h10v4"/><circle cx="1675" cy="349" r="4.500"/><path d="M1729 345h11v12h-11zM1729 351h11M1734.500 345v12"/><ellipse cx="1753" cy="350" rx="6" ry="4.500"/><path d="M1749 357l3-3"/>
</g>
<path d="M1650 358v-12h12zM1653 355h4l-4-5z" fill="#d8d8d8" fill-rule="evenodd"/>
<path d="M1677 350l1 8 2-2 3 2z" fill="#ddd"/>
<path d="M1708 357c-2-4 1-6 3-10 1 4 1 3 3 3 1-1 1-2 2-3 2 3 3 7 0 10z" fill="#aaa"/>
<path d="M1767 346h5v2h-5zM1774 347v10l3-3 4 3-1-5z" fill="#ccc"/>
<text x="1695" y="358" class="c" style="font-size:15px;fill:#ccc">A</text>
<path d="M1785 346h13M1785 349.500h13M1785 353h13M1785 356.500h13" stroke="#a8a8a8"/>
<rect x="1608" y="361.500" width="74" height="19.500" rx="1" fill="#ffd08f" stroke="#8f9bb5" stroke-width="1.500"/>
<rect x="1687" y="362" width="74" height="19" fill="#a8202d"/>
<rect x="1767" y="362" width="74" height="19" fill="url(#ckd)"/>

<!-- color slider -->
<rect x="1607" y="396" width="236" height="16" fill="#3a3a3a"/>
<use href="#ham" x="1609" y="401" width="8" height="6"/>
<rect x="1620" y="400" width="63" height="12" fill="#4c4c4c"/><path d="M1625 403h10M1625 406h10M1625 409h10" stroke="#bbb"/><text class="tab" x="1640" y="409" textLength="40" lengthAdjust="spacingAndGlyphs">Color Slider</text>
<rect x="1607" y="412" width="236" height="98" fill="#474747"/>
<rect x="1609" y="415" width="12" height="57" fill="#3f3f3f"/>
<text transform="translate(1618 430) rotate(-90)" style="font-size:8px;fill:#888">RGB</text>
<text transform="translate(1618 452) rotate(-90)" style="font-size:9px;fill:#e0e0e0">HSV</text>
<text transform="translate(1618 469) rotate(-90)" style="font-size:8px;fill:#888">CM</text>
<text x="1621" y="430" style="font-size:8.500px;fill:#ddd">H</text><text x="1622" y="448" style="font-size:8.500px;fill:#ddd">S</text><text x="1622" y="465" style="font-size:8.500px;fill:#ddd">V</text>
<rect x="1633" y="423" width="167" height="6" fill="url(#hue)"/><rect x="1633" y="441" width="170" height="6" fill="url(#sat)"/><rect x="1634" y="459" width="169" height="6" fill="url(#val)"/>
<path d="M1646 434l3-3 3 3M1704 452l3-3 3 3M1799 469l3-3 3 3" fill="none" stroke="#aaa"/>
<text x="1812" y="430" style="font-size:9.500px">35</text><text x="1811" y="448" style="font-size:9.500px">44%</text><text x="1808" y="466" style="font-size:9.500px">100%</text>
<path d="M1832 425l3-3 3 3M1832 430l3 3 3-3M1832 443l3-3 3 3M1832 448l3 3 3-3M1832 461l3-3 3 3M1832 466l3 3 3-3" fill="none" stroke="#aaa"/>
<rect x="1608" y="477.500" width="74" height="19.500" rx="1" fill="#ffd08f" stroke="#8f9bb5" stroke-width="1.500"/>
<rect x="1687" y="478" width="74" height="19" fill="#a8202d"/>
<rect x="1767" y="478" width="74" height="19" fill="url(#ckd)"/>

<!-- sub tool -->
<rect x="1607" y="510" width="236" height="14" fill="#3a3a3a"/>
<use href="#ham" x="1609" y="514" width="8" height="6"/>
<rect x="1620" y="513" width="93" height="11" fill="#4c4c4c"/><path d="M1625 524l8-7" stroke="#ccc" stroke-width="2"/><text class="tab" x="1640" y="522.500" textLength="70" lengthAdjust="spacingAndGlyphs">Sub Tool: Move layer</text>
<rect x="1607" y="524" width="236" height="286" fill="#404040"/>
<rect x="1608" y="528" width="105" height="18" fill="#5c6a8a"/><use href="#mv" x="1610" y="530" width="14" height="14"/><text x="1626" y="540.500" textLength="40" class="h">Move layer</text>
<rect x="1607" y="547" width="225" height="51" fill="#3a3a3a"/>
<rect x="1607" y="547" width="112" height="25.500" fill="#5c6a8a"/><use href="#mv" x="1610" y="551" width="14" height="14"/>
<rect x="1675" y="560" width="44" height="12" fill="#3c3c3c"/><text x="1677" y="569.500" textLength="40" class="h">Move layer</text>
<use href="#mv" x="1723" y="551" width="14" height="14"/><text x="1761" y="569.500" textLength="69" class="h">Move tone pattern</text>
<rect x="1607" y="573" width="113" height="25" fill="#333"/><use href="#mv" x="1610" y="577" width="14" height="14"/><text x="1680" y="595.500" textLength="37" class="h">Move grid</text>
<circle cx="1695" cy="620" r="4" fill="#cfcfcf"/><path d="M1695 617.500v5M1692.500 620h5" stroke="#404040"/><text x="1704" y="623.500" textLength="47" class="h">Add sub tool</text>
<rect x="1607" y="811" width="236" height="14" fill="#4c4c4c"/>
<g fill="none" stroke="#a8a8a8"><rect x="1802" y="814" width="9" height="9"/><path d="M1806.500 815v5"/><rect x="1816" y="815" width="8" height="8"/><rect x="1818" y="813.500" width="8" height="8"/><rect x="1832" y="815" width="7" height="8"/><path d="M1831 814h9"/></g>

<!-- tool property -->
<rect x="1607" y="825" width="236" height="15" fill="#3a3a3a"/>
<use href="#ham" x="1609" y="831" width="8" height="6"/>
<rect x="1620" y="829" width="108" height="11" fill="#4c4c4c"/><path d="M1625 839l8-7" stroke="#ccc" stroke-width="2"/><text class="tab" x="1640" y="838" textLength="85" lengthAdjust="spacingAndGlyphs">Tool property: Move layer</text>
<rect x="1607" y="840" width="236" height="3" fill="#454545"/>
<rect x="1607" y="843" width="236" height="27" fill="#505050"/>
<text x="1608" y="852.500" textLength="40" class="h">Move layer</text>
<rect x="1830" y="862" width="8" height="6" fill="#ddd"/><path d="M1829 862v-2a2 2 0 0 1 4 0" fill="none" stroke="#ddd"/>
<rect x="1607" y="870" width="236" height="148" fill="#404040"/>
<text x="1618.500" y="885.500" class="h">Mode</text>
<rect x="1773" y="873" width="58" height="17.500" fill="#4d4d4d" stroke="#5c5c5c"/>
<rect x="1773" y="873" width="16" height="17.500" fill="#6a80c0"/><rect x="1777" y="877" width="9" height="9" fill="#5a78c4" stroke="#8fa4d4"/>
<rect x="1793" y="877" width="9" height="9" fill="url(#cks)" opacity=".5"/><path d="M1808 877h9v9h-9zM1811 877v9M1814 877v9M1808 880h9M1808 883h9" fill="none" stroke="#bbb" stroke-width=".7"/>
<path d="M1822 880l3-3 3 3M1822 884l3 3 3-3" fill="none" stroke="#bbb"/>
<rect x="1618.500" y="895.500" width="10" height="10" rx="1" fill="#555" stroke="#777"/><text x="1631.500" y="903.500" textLength="146" class="h">Move the object at the clicked position</text>
<rect x="1618.500" y="912" width="10" height="10" rx="1" fill="#555" stroke="#777"/><text x="1631.500" y="920" textLength="121" class="h">Move layers in the selected area</text>
<rect x="1618.500" y="928.500" width="10" height="10" rx="1" fill="#474747"/><text x="1631.500" y="936.500" textLength="116" class="h" style="fill:#7d7d7d">Moved layers become selected</text>
<rect x="1607" y="1018" width="236" height="14" fill="#4c4c4c"/>
<circle cx="1820" cy="1025" r="5" fill="none" stroke="#aaa"/><path d="M1820 1022v4" stroke="#aaa"/><circle cx="1833" cy="1023" r="3.500" fill="none" stroke="#aaa"/><path d="M1835 1026l5 5" stroke="#aaa"/>
</svg>
<div id="wheel"></div>
<svg width="1843" height="1037" viewBox="0 0 1843 1037" style="pointer-events:none" xmlns="http://www.w3.org/2000/svg">
<rect x="1450.500" y="74" width="5.500" height="17" fill="#f4a030" stroke="#fff" stroke-width="1.300" transform="rotate(-24 1453 83)"/>
<circle cx="1488" cy="112.500" r="3.200" fill="none" stroke="#444" stroke-width="1"/>
</svg>
</div></body></html>
